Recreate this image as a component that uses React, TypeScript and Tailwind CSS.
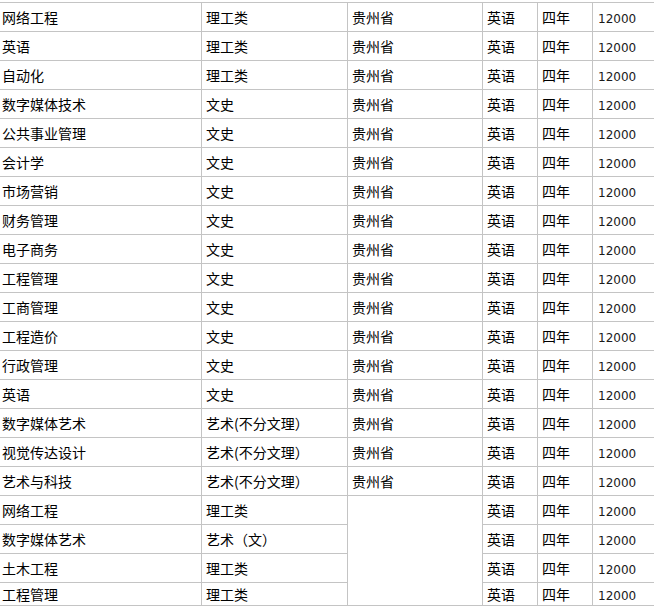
import React from 'react';

type Row = { major: string; cat: string; prov?: string };

const rows: Row[] = [
  { major: '网络工程', cat: '理工类', prov: '贵州省' },
  { major: '英语', cat: '理工类', prov: '贵州省' },
  { major: '自动化', cat: '理工类', prov: '贵州省' },
  { major: '数字媒体技术', cat: '文史', prov: '贵州省' },
  { major: '公共事业管理', cat: '文史', prov: '贵州省' },
  { major: '会计学', cat: '文史', prov: '贵州省' },
  { major: '市场营销', cat: '文史', prov: '贵州省' },
  { major: '财务管理', cat: '文史', prov: '贵州省' },
  { major: '电子商务', cat: '文史', prov: '贵州省' },
  { major: '工程管理', cat: '文史', prov: '贵州省' },
  { major: '工商管理', cat: '文史', prov: '贵州省' },
  { major: '工程造价', cat: '文史', prov: '贵州省' },
  { major: '行政管理', cat: '文史', prov: '贵州省' },
  { major: '英语', cat: '文史', prov: '贵州省' },
  { major: '数字媒体艺术', cat: '艺术(不分文理）', prov: '贵州省' },
  { major: '视觉传达设计', cat: '艺术(不分文理）', prov: '贵州省' },
  { major: '艺术与科技', cat: '艺术(不分文理）', prov: '贵州省' },
  { major: '网络工程', cat: '理工类' },
  { major: '数字媒体艺术', cat: '艺术（文）' },
  { major: '土木工程', cat: '理工类' },
  { major: '工程管理', cat: '理工类' },
];

const cell = 'flex items-center border-b border-r border-[#c4c4c4] pl-1 text-[14px] text-black';

export default function App() {
  return (
    <div className="w-[654px] h-[613px] overflow-hidden bg-white pt-[2px] font-['Noto_Sans_CJK_SC',sans-serif]">
      <div className="grid w-[680px] grid-cols-[202px_146px_135px_55px_55px_1fr] border-t border-[#c4c4c4]">
        {rows.map((r, i) => {
          const h = i === rows.length - 1 ? 'h-[23px]' : 'h-[29px]';
          return (
            <React.Fragment key={i}>
              <div className={`${cell} ${h} !pl-[2px]`}>{r.major}</div>
              <div className={`${cell} ${h}`}>{r.cat}</div>
              {r.prov ? (
                <div className={`${cell} ${h}`}>{r.prov}</div>
              ) : i === 17 ? (
                <div className="row-span-4 border-b border-r border-[#c4c4c4]" />
              ) : null}
              <div className={`${cell} ${h}`}>英语</div>
              <div className={`${cell} ${h}`}>四年</div>
              <div className={`${cell} ${h} pt-[3px] font-['DejaVu_Sans',sans-serif] !text-[12px] !text-[#1a1a1a] !pl-[5px]`}>12000</div>
            </React.Fragment>
          );
        })}
      </div>
    </div>
  );
}
